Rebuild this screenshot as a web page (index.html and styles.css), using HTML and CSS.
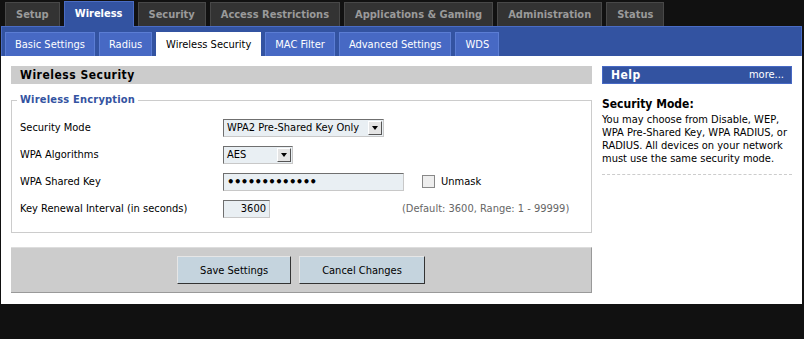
FILE: index.html
```html
<!DOCTYPE html>
<html lang="en">
  <head>
    <meta charset="UTF-8" />
    <title>Wireless Security</title>
    <link rel="stylesheet" href="styles.css">
  </head>
  <body>
    <div class="page">
      <nav class="main-tabs">
        <a class="main-tab">Setup</a>
        <a class="main-tab active">Wireless</a>
        <a class="main-tab">Security</a>
        <a class="main-tab">Access Restrictions</a>
        <a class="main-tab">Applications &amp; Gaming</a>
        <a class="main-tab">Administration</a>
        <a class="main-tab">Status</a>
      </nav>

      <div class="band">
        <nav class="sub-tabs">
          <a class="sub-tab">Basic Settings</a>
          <a class="sub-tab">Radius</a>
          <a class="sub-tab active">Wireless Security</a>
          <a class="sub-tab">MAC Filter</a>
          <a class="sub-tab">Advanced Settings</a>
          <a class="sub-tab">WDS</a>
        </nav>
      </div>

      <div class="content">
        <div class="main-col">
          <div class="section-head">Wireless Security</div>

          <fieldset class="group">
            <legend>Wireless Encryption</legend>

            <div class="form-row">
              <label>Security Mode</label>
              <span class="select select-mode">
                <span class="select-value">WPA2 Pre-Shared Key Only</span>
                <span class="select-btn"></span>
              </span>
            </div>

            <div class="form-row">
              <label>WPA Algorithms</label>
              <span class="select select-algo">
                <span class="select-value">AES</span>
                <span class="select-btn"></span>
              </span>
            </div>

            <div class="form-row">
              <label>WPA Shared Key</label>
              <input class="field field-key" type="password" value="secretkey1234" />
              <span class="unmask"><span class="check"></span>Unmask</span>
            </div>

            <div class="form-row">
              <label>Key Renewal Interval (in seconds)</label>
              <input class="field field-num" type="text" value="3600" />
              <span class="hint">(Default: 3600, Range: 1 - 99999)</span>
            </div>
          </fieldset>

          <div class="actions">
            <button class="btn">Save Settings</button>
            <button class="btn">Cancel Changes</button>
          </div>
        </div>

        <aside class="help">
          <div class="help-head">
            <span>Help</span>
            <span class="more">more...</span>
          </div>
          <h4>Security Mode:</h4>
          <p>You may choose from Disable, WEP, WPA Pre-Shared Key, WPA RADIUS, or RADIUS. All devices on your network must use the same security mode.</p>
          <div class="dashed"></div>
        </aside>
      </div>
    </div>
  </body>
</html>
```

FILE: styles.css
```css
body {
  margin: 0;
  background-color: #111;
  font-family: "DejaVu Sans Condensed", "Liberation Sans", sans-serif;
  font-size: 11px;
  color: #000;
}

.page {
  width: 801px;
  margin-left: 1px;
}

/* top level tabs */
.main-tabs {
  display: flex;
  align-items: flex-end;
  gap: 4px;
  height: 26px;
  padding-left: 4px;
}

.main-tab {
  box-sizing: border-box;
  height: 24px;
  line-height: 23px;
  padding: 0 10px;
  background-color: #333;
  border: 1px solid #484848;
  border-bottom: none;
  color: #9a9a9a;
  font-size: 11px;
  font-weight: bold;
}

.main-tab.active {
  position: relative;
  height: 26px;
  line-height: 24px;
  margin-bottom: -1px;
  background-color: #3353a1;
  border-color: #4a6cc4;
  color: #fff;
}

/* blue band with sub tabs */
.band {
  box-sizing: border-box;
  height: 30px;
  background-color: #3353a1;
  border: 1px solid #4a6cc4;
  border-bottom: none;
}

.sub-tabs {
  display: flex;
  gap: 4px;
  padding: 5px 0 0 3px;
}

.sub-tab {
  box-sizing: border-box;
  height: 24px;
  line-height: 23px;
  padding: 0 9px;
  background-color: #4769c4;
  border: 1px solid #5b7dd4;
  border-bottom: none;
  color: #fff;
}

.sub-tab.active {
  background-color: #fff;
  border-color: #fff;
  color: #000;
}

/* content */
.content {
  display: flex;
  gap: 10px;
  background-color: #fff;
  padding: 10px 10px 11px 10px;
}

.main-col {
  width: 581px;
}

.section-head {
  height: 18px;
  line-height: 18px;
  padding-left: 9px;
  background-color: #ccc;
  font-size: 12px;
  font-weight: bold;
  letter-spacing: 0.5px;
}

.group {
  margin: 9px 0 0;
  padding: 7px 8px 10px;
  border: 1px solid #ccc;
}

.group legend {
  margin-left: -3px;
  padding: 0 3px;
  color: #3353a1;
  font-size: 11px;
  font-weight: bold;
  line-height: 14px;
  letter-spacing: 0.2px;
}

.form-row {
  display: grid;
  grid-template-columns: 203px 179px auto;
  align-items: center;
  height: 27px;
}

.select {
  box-sizing: border-box;
  display: flex;
  height: 18px;
  background-color: #e9eff3;
  border: 1px solid;
  border-color: #6f6f6f #c8c8c8 #c8c8c8 #6f6f6f;
}

.select-mode {
  width: 161px;
}

.select-algo {
  width: 70px;
}

.select-value {
  flex: 1;
  padding-left: 3px;
  line-height: 16px;
}

.select-btn {
  box-sizing: border-box;
  width: 14px;
  height: 14px;
  margin: 1px 1px 0 0;
  background-color: #e4e4e4;
  border: 1px solid;
  border-color: #fff #555 #555 #fff;
  display: flex;
  align-items: center;
  justify-content: center;
}

.select-btn::after {
  content: "";
  border-left: 3px solid transparent;
  border-right: 3px solid transparent;
  border-top: 4px solid #000;
}

.field {
  box-sizing: border-box;
  height: 18px;
  margin: 0;
  padding: 0 3px;
  background-color: #e9eff3;
  border: 1px solid;
  border-color: #6f6f6f #c8c8c8 #c8c8c8 #6f6f6f;
  font-family: inherit;
  font-size: 11px;
  color: #000;
}

.field-key {
  width: 181px;
  font-size: 13px;
  font-weight: bold;
  letter-spacing: -0.6px;
}

.field-num {
  width: 47px;
  text-align: right;
}

.unmask {
  display: flex;
  align-items: center;
  margin-left: 20px;
}

.check {
  box-sizing: border-box;
  width: 13px;
  height: 13px;
  margin-right: 6px;
  background-color: #eee;
  border: 1px solid #888;
}

.hint {
  color: #666;
}

.actions {
  box-sizing: border-box;
  display: flex;
  justify-content: center;
  align-items: center;
  gap: 8px;
  height: 46px;
  margin-top: 14px;
  background-color: #ccc;
  border-top: 1px solid #ddd;
  border-right: 1px solid #999;
  border-bottom: 1px solid #999;
}

.btn {
  box-sizing: border-box;
  height: 28px;
  padding: 0 22px;
  background-color: #c5d4de;
  border: 1px solid;
  border-color: #e6e6e6 #333 #333 #e6e6e6;
  font-family: inherit;
  font-size: 11px;
  color: #000;
}

/* help panel */
.help {
  width: 190px;
}

.help-head {
  box-sizing: border-box;
  display: flex;
  justify-content: space-between;
  height: 18px;
  line-height: 16px;
  padding: 0 7px 0 8px;
  background-color: #3353a1;
  border: 1px solid #4769c4;
  color: #fff;
}

.help-head span:first-child {
  font-size: 12px;
  font-weight: bold;
  letter-spacing: 0.5px;
}

.help h4 {
  margin: 13px 0 2px;
  font-size: 12px;
  line-height: 14px;
}

.help p {
  margin: 0;
  line-height: 13px;
}

.dashed {
  margin-top: 9px;
  border-top: 1px dashed #ccc;
}
```
